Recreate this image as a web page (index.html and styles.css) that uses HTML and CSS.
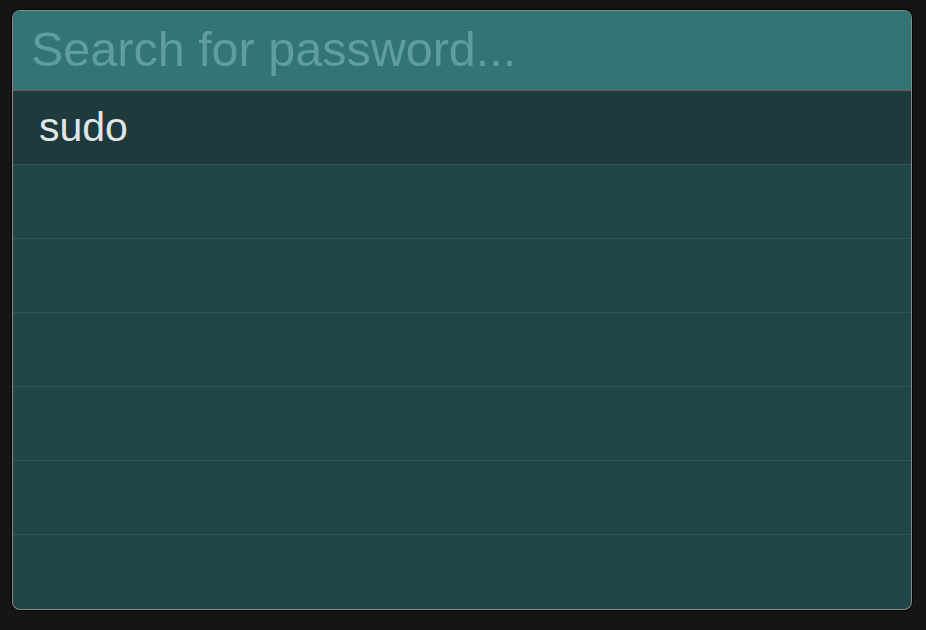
FILE: index.html
```html
<!DOCTYPE html>
<html>
<head>
<meta charset="utf-8">
<link rel="stylesheet" href="styles.css">
</head>
<body>
<div class="window">
  <div class="search">
    <input class="search-input" type="text" placeholder="Search for password...">
  </div>
  <ul class="list">
    <li class="row selected">sudo</li>
    <li class="row"></li>
    <li class="row"></li>
    <li class="row"></li>
    <li class="row"></li>
    <li class="row"></li>
    <li class="row last"></li>
  </ul>
</div>
</body>
</html>
```
FILE: styles.css
```css
html, body {
  margin: 0;
  padding: 0;
  height: 100%;
}
body {
  background: #151515;
  padding: 10px 14px 0 12px;
  box-sizing: border-box;
  font-family: "Liberation Sans", Arial, sans-serif;
}
.window {
  width: 900px;
  height: 600px;
  box-sizing: border-box;
  border: 1px solid #868a8a;
  border-top-color: #6e9a9b;
  border-radius: 8px;
  overflow: hidden;
  background: #224648;
  box-shadow: 0 0 0 1px #050505;
  display: flex;
  flex-direction: column;
}
.search {
  height: 78px;
  background: #337475;
  border-bottom: 2px solid #5c6161;
  display: flex;
  align-items: center;
  flex: none;
}
.search-input {
  width: 100%;
  border: none;
  outline: none;
  background: transparent;
  font-family: "Liberation Sans", Arial, sans-serif;
  font-size: 48.5px;
  color: #e0e6e6;
  padding: 0 0 0 18px;
  margin-top: -3px;
}
.search-input::placeholder {
  color: #5f9d9e;
}
.list {
  list-style: none;
  margin: 0;
  padding: 0;
  flex: 1;
  display: flex;
  flex-direction: column;
}
.row {
  height: 73px;
  border-bottom: 1px solid #2e575b;
  box-sizing: content-box;
  display: flex;
  align-items: center;
  padding-left: 26px;
  font-size: 41px;
  color: #e0e6e6;
  flex: none;
}
.row.last {
  border-bottom: none;
  flex: 1;
}
.row.selected {
  background: #1e3a3d;
}
```
